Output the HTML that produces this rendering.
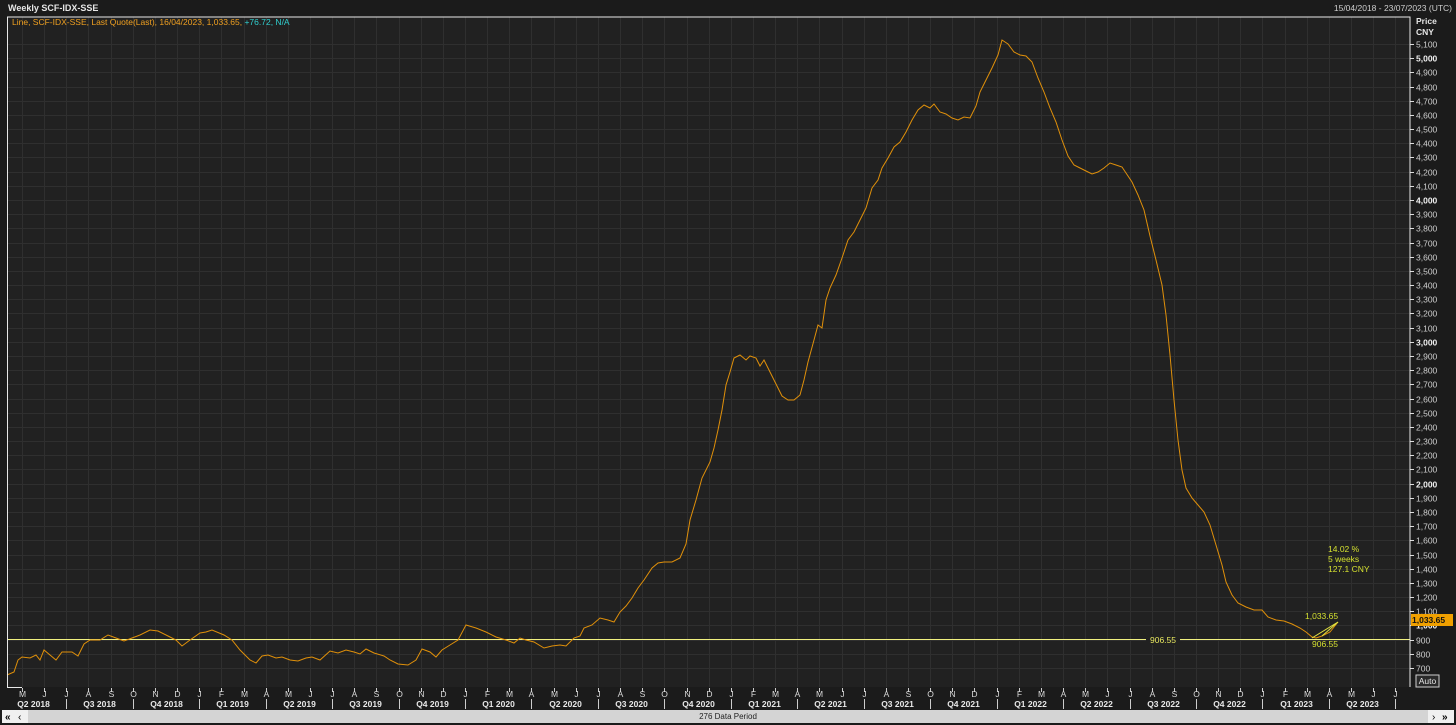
<!DOCTYPE html>
<html><head><meta charset="utf-8"><style>
html,body{margin:0;padding:0;background:#1b1b1b;width:1456px;height:725px;overflow:hidden;font-family:"Liberation Sans",sans-serif}
svg{position:absolute;left:0;top:0}
</style></head><body>
<svg id="s" width="1456" height="725" xmlns="http://www.w3.org/2000/svg" font-family="Liberation Sans, sans-serif">
<rect x="0" y="0" width="1456" height="725" fill="#1b1b1b"/>
<rect x="7" y="17" width="1403" height="670" fill="#212121"/>
<g id="grid" stroke="#2f2f2f" stroke-width="1"></g>
<g id="lbl"></g>
<text x="8" y="11" fill="#e6e6e6" font-size="9" font-weight="bold">Weekly SCF-IDX-SSE</text>
<text x="1452" y="11" fill="#cfcfcf" font-size="8.5" text-anchor="end">15/04/2018 - 23/07/2023 (UTC)</text>
<text x="12" y="25" font-size="8.5"><tspan fill="#f0a020">Line, SCF-IDX-SSE, Last Quote(Last),  16/04/2023,  1,033.65, </tspan><tspan fill="#30d0d0">+76.72, N/A</tspan></text>
<text x="1416" y="24" fill="#e6e6e6" font-size="8.5" font-weight="bold">Price</text>
<text x="1416" y="35" fill="#e6e6e6" font-size="8.5" font-weight="bold">CNY</text>
<line x1="7" y1="639.5" x2="1410" y2="639.5" stroke="#f0f080" stroke-width="1"/>
<rect x="1146" y="634" width="34" height="11" fill="#212121"/>
<text x="1163" y="643" fill="#e8e860" font-size="8.5" text-anchor="middle">906.55</text>
<polyline id="pl" fill="none" stroke="#e0900a" stroke-width="1"/>
<polyline points="1312,638 1338,622 1322,636" fill="none" stroke="#e0e040" stroke-width="1"/>
<text x="1328" y="552" fill="#d4e030" font-size="8.5">14.02 %</text>
<text x="1328" y="562" fill="#d4e030" font-size="8.5">5 weeks</text>
<text x="1328" y="572" fill="#d4e030" font-size="8.5">127.1 CNY</text>
<text x="1305" y="619" fill="#d4e030" font-size="8.5">1,033.65</text>
<text x="1312" y="647" fill="#d4e030" font-size="8.5">906.55</text>
<polyline points="7,17 1410,17 1410,687" fill="none" stroke="#e8e8e8" stroke-width="1"/>
<polyline points="7.5,17 7.5,687.5 22,687.5" fill="none" stroke="#e8e8e8" stroke-width="1"/>
<rect x="1411" y="614" width="42" height="12" fill="#f0a000"/>
<text x="1412" y="623" fill="#111" font-size="8.5" font-weight="bold">1,033.65</text>
<rect x="1416" y="675" width="23" height="12" fill="#2a2a2a" stroke="#cfcfcf"/>
<text x="1427.5" y="684" fill="#e6e6e6" font-size="8.5" text-anchor="middle">Auto</text>
<rect x="2" y="710" width="1452" height="13" fill="#d4d4d4"/>
<rect x="2" y="710" width="26" height="13" fill="#f0f0f0"/>
<rect x="1428" y="710" width="26" height="13" fill="#f0f0f0"/>
<text x="5" y="720" fill="#000" font-size="10" font-weight="bold">«</text>
<text x="18" y="720" fill="#000" font-size="10">‹</text>
<text x="1432" y="720" fill="#000" font-size="10">›</text>
<text x="1442" y="720" fill="#000" font-size="10" font-weight="bold">»</text>
<text x="728" y="719" fill="#222" font-size="8" text-anchor="middle">276 Data Period</text>
</svg>
<script>
var NS="http://www.w3.org/2000/svg";
function el(p,t,a,txt){var e=document.createElementNS(NS,t);for(var k in a)e.setAttribute(k,a[k]);if(txt!==undefined)e.textContent=txt;document.getElementById(p).appendChild(e);return e;}
function yv(v){return 668-(v-700)*0.14182;}
for(var v=700;v<=5100;v+=100){var y=Math.round(yv(v))+0.5;
 el("grid","line",{x1:7,y1:y,x2:1410,y2:y});
 el("lbl","line",{x1:1410,y1:y,x2:1414,y2:y,stroke:"#ddd"});
 var s=v>=1000?(Math.floor(v/1000)+","+("00"+(v%1000)).slice(-3)):(""+v);
 var b=v%1000==0;
 if(v!=1000) el("lbl","text",{x:1416,y:y+3,fill:b?"#f0f0f0":"#d0d0d0","font-size":"8.5","font-weight":b?"bold":"normal"},s);
}
el("lbl","text",{x:1416,y:yv(1000)+3,fill:"#f0f0f0","font-size":"8.5","font-weight":"bold"},"1,000");
var ml="JFMAMJJASOND";
for(var i=0;i<63;i++){var m=(4+i)%12;var x=Math.round(22+22.15*i)+0.5;var year=2018+Math.floor((4+i)/12);
 el("grid","line",{x1:x,y1:17,x2:x,y2:687});
 el("lbl","line",{x1:x,y1:688,x2:x,y2:692,stroke:"#ccc"});
 el("lbl","text",{x:x,y:697,fill:"#d8d8d8","font-size":"8.5","text-anchor":"middle"},ml[m]);
 if(m%3==0){el("lbl","line",{x1:x,y1:699,x2:x,y2:709,stroke:"#ccc"});}
 if(m%3==1){var q=Math.floor(m/3)+1;el("lbl","text",{x:x+11,y:707,fill:"#e8e8e8","font-size":"8.5","font-weight":"bold","text-anchor":"middle"},"Q"+q+" "+year);}
}
var pts="7,675 14,672 18,660 22,657 30,658 36,655 40,660 44,650 50,655 56,660 62,652 72,652 78,656 84,644 90,640 100,640 108,635 116,638 124,641 132,638 140,635 150,630 158,631 168,636 176,640 182,646 190,640 200,633 206,632 212,630 224,635 232,640 240,650 250,660 256,663 262,656 268,655 276,658 282,657 290,660 298,661 306,658 312,657 320,660 330,651 338,653 346,650 354,652 360,654 366,649 374,653 384,656 390,660 398,664 408,665 416,660 422,649 430,652 436,657 442,650 450,645 458,640 466,625 476,628 486,632 496,637 506,640 514,643 520,638 526,640 534,642 544,648 552,646 560,645 566,646 574,638 580,636 584,628 592,625 600,618 608,620 614,622 620,612 626,606 632,598 638,588 644,580 652,568 658,563 664,562 672,562 680,558 686,544 690,520 696,500 702,478 710,462 714,448 718,430 722,410 726,385 730,372 734,358 740,355 746,360 750,356 756,358 760,366 764,360 770,372 776,384 782,396 788,400 794,400 800,395 804,380 808,362 814,340 818,325 822,328 826,300 830,288 836,275 842,258 848,240 854,232 860,220 866,208 872,188 878,180 882,168 888,158 894,147 900,142 906,132 912,120 918,110 924,105 930,108 934,104 940,112 946,114 952,118 958,120 964,117 970,118 976,106 980,92 986,80 992,68 998,55 1002,40 1008,44 1014,52 1020,55 1026,56 1032,62 1038,78 1044,92 1050,108 1056,122 1062,140 1068,156 1074,165 1080,168 1086,171 1092,174 1098,172 1104,168 1110,163 1116,165 1122,167 1126,173 1132,182 1138,195 1144,210 1150,236 1156,260 1162,285 1166,315 1170,355 1174,400 1178,440 1182,470 1186,488 1192,498 1198,505 1204,512 1210,525 1216,545 1222,565 1226,582 1232,595 1238,603 1246,607 1254,610 1262,610 1268,617 1276,620 1284,621 1292,624 1300,628 1306,632 1312,637 1316,638 1322,636 1330,632 1334,627 1338,622";
document.getElementById("pl").setAttribute("points",pts);
</script>
</body></html>
